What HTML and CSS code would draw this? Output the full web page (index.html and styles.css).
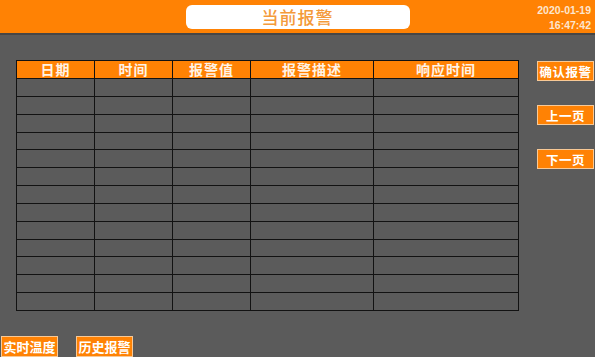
FILE: index.html
```html
<!DOCTYPE html>
<html lang="zh">
<head>
<meta charset="utf-8">
<title>当前报警</title>
<link rel="stylesheet" href="styles.css">
</head>
<body>
<div class="screen">
  <header class="topbar">
    <div class="spacer"></div>
    <div class="title">当前报警</div>
    <div class="clock">
      <div>2020-01-19</div>
      <div>16:47:42</div>
    </div>
  </header>
  <main class="main">
    <div class="grid">
      <div class="th">日期</div>
      <div class="th">时间</div>
      <div class="th">报警值</div>
      <div class="th">报警描述</div>
      <div class="th">响应时间</div>
      <div class="td"></div><div class="td"></div><div class="td"></div><div class="td"></div><div class="td"></div>
      <div class="td"></div><div class="td"></div><div class="td"></div><div class="td"></div><div class="td"></div>
      <div class="td"></div><div class="td"></div><div class="td"></div><div class="td"></div><div class="td"></div>
      <div class="td"></div><div class="td"></div><div class="td"></div><div class="td"></div><div class="td"></div>
      <div class="td"></div><div class="td"></div><div class="td"></div><div class="td"></div><div class="td"></div>
      <div class="td"></div><div class="td"></div><div class="td"></div><div class="td"></div><div class="td"></div>
      <div class="td"></div><div class="td"></div><div class="td"></div><div class="td"></div><div class="td"></div>
      <div class="td"></div><div class="td"></div><div class="td"></div><div class="td"></div><div class="td"></div>
      <div class="td"></div><div class="td"></div><div class="td"></div><div class="td"></div><div class="td"></div>
      <div class="td"></div><div class="td"></div><div class="td"></div><div class="td"></div><div class="td"></div>
      <div class="td"></div><div class="td"></div><div class="td"></div><div class="td"></div><div class="td"></div>
      <div class="td"></div><div class="td"></div><div class="td"></div><div class="td"></div><div class="td"></div>
      <div class="td"></div><div class="td"></div><div class="td"></div><div class="td"></div><div class="td"></div>
    </div>
    <div class="side">
      <button class="btn">确认报警</button>
      <button class="btn">上一页</button>
      <button class="btn">下一页</button>
    </div>
  </main>
  <footer class="footer">
    <button class="btn nav first">实时温度</button>
    <button class="btn nav">历史报警</button>
  </footer>
</div>
</body>
</html>
```
FILE: styles.css
```css
* { box-sizing: border-box; }
html, body { margin: 0; padding: 0; }
body {
  background: #5b5b5b;
  font-family: "Noto Sans CJK SC", "Noto Sans", sans-serif;
}
.screen {
  width: 595px;
  height: 357px;
  display: flex;
  flex-direction: column;
  background: #5b5b5b;
  overflow: hidden;
}
.topbar {
  height: 35px;
  flex: none;
  background: #ff8204;
  border-bottom: 2px solid #464646;
  display: grid;
  grid-template-columns: 1fr 224px 1fr;
  align-items: start;
}
.title {
  margin-top: 5px;
  height: 24px;
  background: #fff;
  border-radius: 6px;
  color: #f49a3a;
  font-size: 17px;
  font-weight: 500;
  letter-spacing: 1px;
  text-align: center;
  line-height: 24px;
}
.clock {
  justify-self: end;
  padding-right: 4px;
  padding-top: 3px;
  font-family: "Liberation Sans", Arial, sans-serif;
  font-weight: bold;
  font-size: 10.5px;
  line-height: 15px;
  color: #fde6cf;
  text-align: right;
}
.main {
  display: flex;
  align-items: flex-start;
  padding: 25px 0 0 16px;
}
.grid {
  width: 503px;
  height: 251px;
  display: grid;
  grid-template-columns: 78px 78px 78px 123px 145px;
  grid-template-rows: 18px repeat(13, 1fr);
  border-top: 1px solid #121212;
  border-left: 1px solid #121212;
}
.th, .td {
  border-right: 1px solid #121212;
  border-bottom: 1px solid #121212;
}
.th {
  background: #ff8204;
  color: #fff3e6;
  font-weight: bold;
  font-size: 14px;
  line-height: 17px;
  text-align: center;
  letter-spacing: 1px;
}
.td { background: #5b5b5b; }
.side {
  margin-left: 18px;
  margin-top: 1px;
  display: flex;
  flex-direction: column;
  gap: 24px;
}
.btn {
  width: 57px;
  height: 20px;
  padding: 0;
  margin: 0;
  background: #ff8204;
  border: 1px solid #f8c996;
  color: #fff;
  font-family: "Noto Sans CJK SC", sans-serif;
  font-weight: bold;
  font-size: 12.5px;
  line-height: 17px;
  letter-spacing: 0.5px;
  text-align: center;
}
.footer {
  margin-top: auto;
  display: flex;
  gap: 18px;
  padding-left: 1px;
}
.btn.nav {
  width: 57px;
  height: 21px;
  font-size: 13px;
  letter-spacing: 0;
}
```
